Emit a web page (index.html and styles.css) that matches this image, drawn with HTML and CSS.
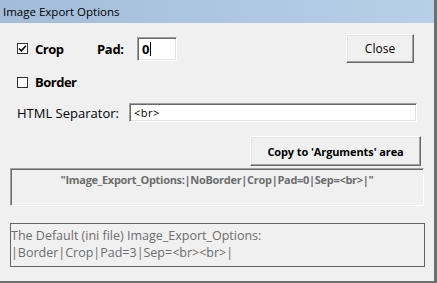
FILE: index.html
```html
<!DOCTYPE html>
<html lang="en">
<head>
    <meta charset="UTF-8">
    <title>Image Export Options</title>
    <link rel="stylesheet" href="styles.css">
</head>
<body>
    <div class="window">
        <div class="titlebar">Image Export Options</div>
        <div class="client">
            <div class="row row_top">
                <label class="check">
                    <span class="check_box">
                        <svg width="9" height="9" viewBox="0 0 9 9"><polyline points="1,4.5 3.3,6.8 8,1.8" fill="none" stroke="#000" stroke-width="1.6"/></svg>
                    </span>
                    Crop
                </label>
                <span class="pad_label">Pad:</span>
                <div class="field pad_field">0<span class="caret"></span></div>
                <button class="btn close_btn">Close</button>
            </div>
            <div class="row row_border">
                <label class="check"><span class="check_box"></span>Border</label>
            </div>
            <div class="row row_sep">
                <span class="sep_label">HTML Separator:</span>
                <div class="field sep_field">&lt;br&gt;</div>
            </div>
            <div class="row row_copy">
                <button class="btn copy_btn">Copy to 'Arguments' area</button>
            </div>
            <div class="result">"Image_Export_Options:|NoBorder|Crop|Pad=0|Sep=&lt;br&gt;|"</div>
            <div class="defaults">The Default (ini file) Image_Export_Options:<br>|Border|Crop|Pad=3|Sep=&lt;br&gt;&lt;br&gt;|</div>
        </div>
    </div>
</body>
</html>
```

FILE: styles.css
```css
body {
    margin: 0;
    padding: 0;
    font-family: "Open Sans", "Noto Sans", sans-serif;
    font-size: 12px;
    background-color: #f0f0f0;
    color: #000;
}

.window {
    width: 437px;
    height: 283px;
    box-sizing: border-box;
    border-right: 3px solid #6f6f6f;
    border-bottom: 2px solid #6f6f6f;
    overflow: hidden;
}

.titlebar {
    height: 23px;
    line-height: 23px;
    padding-left: 3px;
    font-size: 11.5px;
    background: linear-gradient(to right, #a2bcd9, #b8cfe9);
}

.row {
    display: flex;
    align-items: center;
    padding-left: 17px;
}

.row_top {
    height: 29px;
    margin-top: 11px;
    padding-right: 20px;
}

.row_border {
    height: 20px;
    margin-top: 9px;
}

.row_sep {
    height: 19px;
    margin-top: 11px;
}

.row_copy {
    height: 30px;
    margin-top: 14px;
    justify-content: flex-end;
    padding-right: 13px;
}

.check {
    display: flex;
    align-items: center;
    width: 80px;
    font-weight: bold;
    font-size: 13px;
    letter-spacing: -0.5px;
}

.check_box {
    display: flex;
    align-items: center;
    justify-content: center;
    width: 11px;
    height: 11px;
    box-sizing: border-box;
    border: 1px solid #333;
    background-color: #fff;
    margin-right: 7px;
}

.pad_label {
    width: 40px;
    font-weight: bold;
    font-size: 13px;
    letter-spacing: -0.3px;
}

.field {
    box-sizing: border-box;
    background-color: #fff;
    border-top: 1px solid #a0a0a0;
    border-left: 1px solid #a0a0a0;
    border-right: 1px solid #fff;
    border-bottom: 1px solid #fff;
    box-shadow: inset 1px 1px 0 #696969, inset -1px -1px 0 #e3e3e3;
    display: flex;
    align-items: center;
}

.pad_field {
    width: 40px;
    height: 24px;
    padding-left: 4px;
    font-weight: bold;
    font-size: 13px;
}

.caret {
    display: inline-block;
    width: 1px;
    height: 14px;
    margin-left: 1px;
    background-color: #000;
}

.sep_label {
    width: 112px;
    font-size: 13px;
}

.sep_field {
    width: 288px;
    height: 19px;
    padding-left: 4px;
    font-size: 11px;
    letter-spacing: 0.5px;
}

.btn {
    font-family: inherit;
    font-size: 12px;
    color: #000;
    background-color: #f0f0f0;
    box-sizing: border-box;
    border-top: 1px solid #fff;
    border-left: 1px solid #fff;
    border-right: 1px solid #696969;
    border-bottom: 1px solid #696969;
    box-shadow: inset -1px -1px 0 #a0a0a0, inset 1px 1px 0 #e3e3e3;
    padding: 0;
}

.close_btn {
    margin-left: auto;
    width: 68px;
    height: 29px;
}

.copy_btn {
    width: 171px;
    height: 30px;
    font-size: 11px;
    font-weight: bold;
    letter-spacing: -0.1px;
}

.result {
    margin: 2px 10px 0 10px;
    height: 38px;
    box-sizing: border-box;
    border-top: 1px solid #a0a0a0;
    border-left: 1px solid #a0a0a0;
    border-right: 1px solid #fff;
    border-bottom: 1px solid #fff;
    box-shadow: inset 1px 1px 0 #696969;
    text-align: center;
    font-size: 11px;
    font-weight: bold;
    letter-spacing: -0.3px;
    color: #6d6d6d;
    padding-top: 3px;
    line-height: 16px;
}

.defaults {
    margin: 17px 9px 0 10px;
    height: 44px;
    box-sizing: border-box;
    border: 1px solid #646464;
    color: #6d6d6d;
    font-size: 12.5px;
    line-height: 17px;
    padding-top: 3px;
}
```
